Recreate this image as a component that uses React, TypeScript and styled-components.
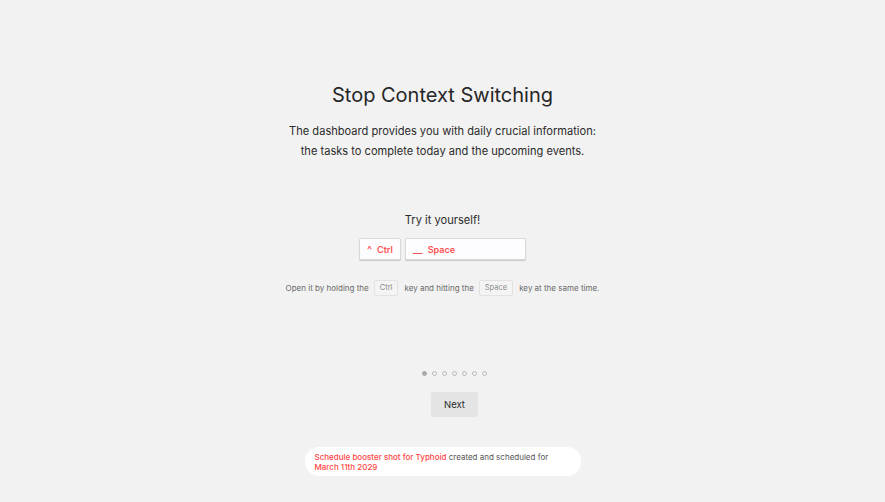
import React from "react";
import styled, { createGlobalStyle } from "styled-components";

const GlobalStyle = createGlobalStyle`
  html, body {
    margin: 0;
    padding: 0;
    background: #f2f2f2;
    font-family: Inter, "Noto Sans", sans-serif;
    color: #2b2b2b;
  }
`;

const dots = [true, false, false, false, false, false, false];

const App = () => {
  return (
    <Page>
      <GlobalStyle />
      <Title>Stop Context Switching</Title>
      <Lead>
        The dashboard provides you with daily crucial information:
        <br />
        the tasks to complete today and the upcoming events.
      </Lead>

      <TryLabel>Try it yourself!</TryLabel>
      <KeyRow>
        <KeyButton width={42}>
          <KeySymbol>^</KeySymbol>Ctrl
        </KeyButton>
        <KeyButton width={121}>
          <KeySymbol>__</KeySymbol>Space
        </KeyButton>
      </KeyRow>

      <Hint>
        Open it by holding the<Kbd>Ctrl</Kbd>key and hitting the
        <Kbd>Space</Kbd>key at the same time.
      </Hint>

      <Stepper>
        <Dots>
          {dots.map((active, i) => (
            <Dot key={i} active={active} />
          ))}
        </Dots>
        <NextButton>Next</NextButton>
      </Stepper>

      <Toast>
        <Accent>Schedule booster shot for Typhoid</Accent> created and
        scheduled for
        <br />
        <Accent>March 11th 2029</Accent>
      </Toast>
    </Page>
  );
};

export default App;

const Page = styled.div`
  min-height: 502px;
  display: flex;
  flex-direction: column;
  align-items: center;
  padding-top: 82px;
  box-sizing: border-box;
`;

const Title = styled.h1`
  margin: 0;
  font-size: 20px;
  line-height: 26px;
  font-weight: 400;
  color: #262626;
`;

const Lead = styled.p`
  margin: 13px 0 0;
  font-size: 11.1px;
  line-height: 20px;
  text-align: center;
  color: #2b2b2b;
`;

const TryLabel = styled.div`
  margin-top: 50px;
  font-size: 11.1px;
  line-height: 18px;
  color: #2b2b2b;
`;

const KeyRow = styled.div`
  display: flex;
  gap: 4px;
  margin-top: 9px;
`;

const KeyButton = styled.button<{ width: number }>`
  width: ${({ width }) => width}px;
  height: 22px;
  box-sizing: border-box;
  display: flex;
  align-items: center;
  padding: 0 0 0 7px;
  background: #fdfdff;
  border: 1px solid #d9d9d9;
  border-radius: 2px;
  box-shadow: 0 1px 1px rgba(0, 0, 0, 0.18);
  font-family: Inter, "Noto Sans", sans-serif;
  font-size: 9px;
  font-weight: 600;
  color: #ff5252;
  cursor: pointer;
`;

const KeySymbol = styled.span`
  margin-right: 5px;
  font-size: 10.5px;
  font-weight: 500;
`;

const Hint = styled.div`
  margin-top: 20px;
  display: flex;
  align-items: center;
  white-space: pre;
  font-size: 8px;
  line-height: 16px;
  color: #6a6a6a;
`;

const Kbd = styled.span`
  display: inline-flex;
  align-items: center;
  height: 16px;
  box-sizing: border-box;
  padding: 0 5px;
  margin: 0 6px 0 5px;
  border: 1px solid #e2e2e2;
  border-radius: 2px;
  background: #f4f4f4;
  font-size: 7.5px;
  color: #8a8a8a;
`;

const Stepper = styled.div`
  display: flex;
  flex-direction: column;
  align-items: center;
  margin-top: 75px;
  margin-left: 24px;
`;

const Dots = styled.div`
  display: flex;
  gap: 5px;
`;

const Dot = styled.span<{ active: boolean }>`
  width: 5px;
  height: 5px;
  box-sizing: border-box;
  border-radius: 50%;
  border: 1px solid ${({ active }) => (active ? "#a8a8a8" : "#b8b8b8")};
  background: ${({ active }) => (active ? "#a8a8a8" : "transparent")};
`;

const NextButton = styled.button`
  margin-top: 16px;
  width: 47px;
  height: 25px;
  border: none;
  border-radius: 2px;
  background: #e4e4e4;
  font-family: Inter, "Noto Sans", sans-serif;
  font-size: 9.5px;
  color: #2b2b2b;
  cursor: pointer;
`;

const Toast = styled.div`
  margin-top: 30px;
  width: 276px;
  box-sizing: border-box;
  padding: 5px 10px 4px;
  background: #ffffff;
  border-radius: 14px;
  font-size: 8px;
  line-height: 10px;
  color: #555555;
`;

const Accent = styled.span`
  color: #ff4545;
  font-weight: 500;
`;
